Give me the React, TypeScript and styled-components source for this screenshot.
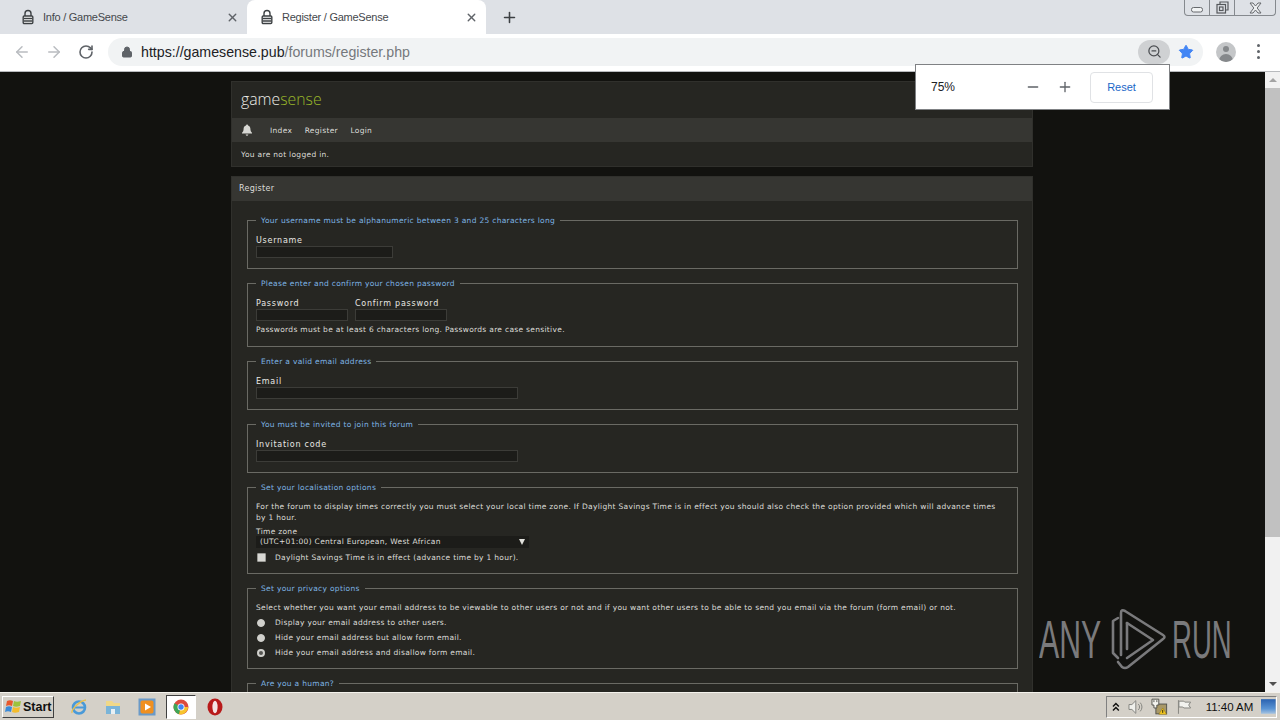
import React from 'react';
import styled, { createGlobalStyle } from 'styled-components';
import { ArrowLeft, ArrowRight, RotateCw, Lock, ZoomOut, Star, Minus, Plus, X } from 'lucide-react';

const Global = createGlobalStyle`
  html, body { margin: 0; padding: 0; width: 1280px; height: 720px; overflow: hidden; }
  body { font-family: 'Liberation Sans', Arial, sans-serif; background: #fff; }
`;

const TabLock = () => (
  <svg width="14" height="16" viewBox="0 0 14 16" fill="none" stroke="#3c4043" strokeWidth="1.4">
    <path d="M4 7V4.500a3 3 0 0 1 6 0V7" />
    <rect x="2.200" y="7" width="9.600" height="7.500" rx="1" fill="#fff" />
    <path d="M3 9.500h8M3 12h8" />
  </svg>
);

const Bell = () => (
  <svg width="12" height="12" viewBox="0 0 12 12" fill="#d8d8d4">
    <path d="M6 .6c.6 0 1 .4 1 .9 1.600.4 2.400 1.700 2.400 3.300 0 2 .6 3 1.600 4v.8H1v-.8c1-1 1.600-2 1.600-4C2.600 3.200 3.400 1.900 5 1.500c0-.5.4-.9 1-.9zM4.600 10.600h2.800C7.200 11.400 6.700 11.800 6 11.800s-1.200-.4-1.400-1.200z" />
  </svg>
);

const MinGlyph = () => (
  <svg width="12" height="6" viewBox="0 0 12 6">
    <rect x="0.500" y="0.500" width="11" height="4.500" rx="2" fill="#f1f3f4" stroke="#66696d" />
  </svg>
);

const RestoreGlyph = () => (
  <svg width="13" height="13" viewBox="0 0 13 13" fill="none" stroke="#55585c" strokeWidth="1.200">
    <path d="M4 3V1h8v8h-2" />
    <rect x="1" y="3.500" width="8.500" height="8.500" />
    <rect x="3.500" y="6" width="3.500" height="3.500" />
  </svg>
);

const CloseGlyph = () => (
  <svg width="13" height="12" viewBox="0 0 13 12">
    <path d="M1 1h3l2.500 3L9 1h3L8.200 6 12 11H9L6.500 8 4 11H1l3.800-5z" fill="#eceef0" stroke="#66696d" />
  </svg>
);

const AnyRunMark = () => (
  <svg width="71" height="70" viewBox="0 0 71 70" fill="none" stroke="#7a7a7c" strokeWidth="2.600" strokeLinejoin="round" strokeLinecap="round">
    <path d="M17 13 12 16V48L17 53" />
    <path d="M20 50V8Q20 4 24 6L62 30Q65 32 62 34L27 62Q24 64 21 62L17 57" />
    <path d="M26 18 52 35 26 53" />
    <path d="M26 18V44" />
  </svg>
);

const WinLogo = () => (
  <svg width="18" height="16" viewBox="0 0 18 16">
    <path d="M3 2c2-1 4-1 6 0L8 7C6 6 4 6 2 7z" fill="#e8582c" />
    <path d="M10 2c2 1 4 1 7 0l-1 5c-3 1-5 1-7 0z" fill="#9cc23c" />
    <path d="M2 8c2-1 4-1 6 0l-1 5c-2-1-4-1-6 0z" fill="#3a8ad8" />
    <path d="M9 8c2 1 4 1 7 0l-1 5c-3 1-5 1-7 0z" fill="#f4bc2c" />
  </svg>
);

const IeIcon = () => (
  <svg width="18" height="18" viewBox="0 0 18 18" fill="none">
    <circle cx="9" cy="9.500" r="6" stroke="#4a9ad8" strokeWidth="2.600" />
    <path d="M3 9.500h12" stroke="#4a9ad8" strokeWidth="2" />
    <path d="M2 15C1 12 9 3 16 2" stroke="#e8c050" strokeWidth="1.300" />
  </svg>
);

const FolderIcon = () => (
  <svg width="16" height="17" viewBox="0 0 16 17">
    <path d="M1 3h6l2 2h6v11H1z" fill="#f0d888" />
    <path d="M1 8h14v8H1z" fill="#7ab4d8" />
    <path d="M6 11h4v5H6z" fill="#e8f0f4" />
  </svg>
);

const MediaIcon = () => (
  <svg width="18" height="18" viewBox="0 0 18 18">
    <rect x="0.500" y="0.500" width="17" height="17" fill="#6a9ac8" />
    <rect x="2.500" y="2.500" width="13" height="13" rx="2" fill="#f09020" />
    <path d="M7 5.500 13 9l-6 3.500z" fill="#fff" />
  </svg>
);

const ChromeIcon = () => (
  <svg width="16" height="16" viewBox="0 0 16 16">
    <circle cx="8" cy="8" r="7.500" fill="#dd4b3e" />
    <path d="M8 8 1.500 4.300A7.500 7.500 0 0 0 6 15.200z" fill="#3fa757" />
    <path d="M8 8h7.200A7.500 7.500 0 0 1 6 15.200z" fill="#f6c42d" />
    <circle cx="8" cy="8" r="3.500" fill="#fff" />
    <circle cx="8" cy="8" r="2.700" fill="#4285f4" />
  </svg>
);

const OperaIcon = () => (
  <svg width="16" height="18" viewBox="0 0 16 18">
    <ellipse cx="8" cy="9" rx="7.500" ry="8.500" fill="#b81a1a" />
    <ellipse cx="8" cy="9" rx="2.600" ry="6.200" fill="#f4e4e4" />
  </svg>
);

const ChevronsUp = () => (
  <svg width="8" height="10" viewBox="0 0 8 10" fill="none" stroke="#101010" strokeWidth="1.500">
    <path d="M1 4.500 4 1.500 7 4.500M1 8.500 4 5.500 7 8.500" />
  </svg>
);

const SpeakerIcon = () => (
  <svg width="16" height="16" viewBox="0 0 16 16" fill="#f0f0ec" stroke="#85857f" strokeWidth="1">
    <path d="M1 5.500h3L8 1.500v13l-4-4H1z" />
    <path d="M10.500 5a4 4 0 0 1 0 6M12.500 3.500a6.500 6.500 0 0 1 0 9" fill="none" />
  </svg>
);

const NetworkIcon = () => (
  <svg width="17" height="17" viewBox="0 0 17 17">
    <rect x="5" y="6" width="11" height="10" fill="#a89868" stroke="#55554f" />
    <path d="M1 1h7v6H6v3H3V7H1z" fill="#f4f4f0" stroke="#55554f" />
    <path d="M3 2v2M6 2v2" stroke="#55554f" />
    <path d="M8 16.500 12 10l4 6.500z" fill="#f4c820" stroke="#8a7010" strokeWidth=".5" />
    <path d="M12 12v3" stroke="#302808" />
  </svg>
);

const FlagIcon = () => (
  <svg width="16" height="16" viewBox="0 0 16 16" fill="#f2f2ee" stroke="#85857f">
    <path d="M2.500 1v14" fill="none" />
    <path d="M3 2h5l1 1h6l-2 3 2 3H8L7 8H3z" />
  </svg>
);

const DesktopIcon = () => (
  <svg width="15" height="15" viewBox="0 0 15 15">
    <defs>
      <linearGradient id="desk" x1="0" y1="0" x2="0" y2="1">
        <stop offset="0" stopColor="#2a62b0" />
        <stop offset="0.65" stopColor="#5a94d4" />
        <stop offset="1" stopColor="#a8c4e0" />
      </linearGradient>
    </defs>
    <rect width="15" height="15" fill="url(#desk)" />
  </svg>
);

const Screen = styled.div`
  width: 1280px;
  height: 720px;
  display: flex;
  flex-direction: column;
  position: relative;
  overflow: hidden;
`;

const TabStrip = styled.div`
  height: 34px;
  background: #dee1e6;
  display: flex;
  align-items: flex-end;
  padding-left: 8px;
  position: relative;
  flex: none;
`;

const Tab = styled.div<{ $active?: boolean }>`
  width: 239px;
  height: 34px;
  display: flex;
  align-items: center;
  padding: 0 8px 0 13px;
  box-sizing: border-box;
  gap: 8px;
  background: ${p => (p.$active ? '#fff' : 'transparent')};
  border-radius: 8px 8px 0 0;
  font-size: 11px;
  letter-spacing: -0.250px;
  color: #45484c;
  span { flex: 1; }
`;

const NewTab = styled.div`
  width: 32px;
  height: 34px;
  display: flex;
  align-items: center;
  justify-content: center;
  margin-left: 7px;
  color: #3c4043;
`;

const WindowControls = styled.div`
  position: absolute;
  top: 0;
  right: 4px;
  width: 92px;
  height: 16px;
  box-sizing: border-box;
  border: 1px solid #85898e;
  border-top: none;
  border-radius: 0 0 4px 4px;
  display: grid;
  grid-template-columns: 24px 25px 1fr;
`;

const WinCell = styled.div<{ $low?: boolean }>`
  display: flex;
  align-items: center;
  justify-content: center;
  padding-top: ${p => (p.$low ? '4px' : '0')};
  & + & { border-left: 1px solid #85898e; }
`;

const Toolbar = styled.div`
  height: 35px;
  padding: 0 0 2px 12px;
  background: #fff;
  border-bottom: 1px solid #b8babd;
  box-sizing: content-box;
  display: flex;
  align-items: center;
  flex: none;
  position: relative;
`;

const NavButton = styled.div<{ $off?: boolean }>`
  width: 20px;
  margin-right: 12px;
  display: flex;
  justify-content: center;
  color: ${p => (p.$off ? '#b9bcc0' : '#5f6368')};
`;

const AddressBar = styled.div`
  width: 1095px;
  height: 28px;
  background: #f1f3f4;
  border-radius: 14px;
  display: flex;
  align-items: center;
  padding-left: 13px;
  box-sizing: border-box;
  font-size: 14.200px;
  gap: 8px;
  color: #202124;
`;

const UrlFaint = styled.span`
  color: #75787c;
`;

const Url = styled.div`
  flex: 1;
`;

const ZoomPill = styled.div`
  width: 32px;
  height: 24px;
  border-radius: 12px;
  background: #cfd1d3;
  display: flex;
  align-items: center;
  justify-content: center;
  color: #4a4d51;
  margin-right: -7px;
`;

const StarPill = styled.div`
  width: 30px;
  height: 28px;
  display: flex;
  align-items: center;
  justify-content: center;
  color: #4285f4;
  margin-right: 2px;
`;

const Avatar = styled.div`
  width: 20px;
  height: 20px;
  margin-left: 13px;
  border-radius: 50%;
  background: #c4c6c8;
  position: relative;
  overflow: hidden;
  flex: none;
  &::before {
    content: '';
    position: absolute;
    left: 7px;
    top: 4px;
    width: 6px;
    height: 6px;
    border-radius: 50%;
    background: #85888b;
  }
  &::after {
    content: '';
    position: absolute;
    left: 3px;
    top: 12px;
    width: 14px;
    height: 8px;
    border-radius: 7px 7px 0 0;
    background: #85888b;
  }
`;

const Kebab = styled.div`
  margin-left: 21px;
  display: flex;
  flex-direction: column;
  gap: 3px;
  i {
    display: block;
    width: 3px;
    height: 3px;
    border-radius: 50%;
    background: #5f6368;
  }
`;

const Viewport = styled.div`
  height: 620px;
  flex: none;
  display: flex;
  background: #12120f;
  overflow: hidden;
`;

const Page = styled.div`
  flex: 1;
  height: 620px;
  overflow: hidden;
  padding: 9px 232px 0 231px;
  box-sizing: border-box;
  font-family: 'DejaVu Sans', Verdana, sans-serif;
  font-size: 7.500px;
  letter-spacing: 0.300px;
  color: #dcdcd8;
`;

const Panel = styled.div`
  background: #262622;
  border: 1px solid #30302c;
  margin-bottom: 9px;
`;

const Brand = styled.div`
  height: 34px;
  padding: 0 0 2px 9px;
  display: flex;
  align-items: center;
  font-family: 'Open Sans', sans-serif;
  font-size: 15.800px;
  font-weight: 300;
  letter-spacing: 0;
  color: #ecece8;
  em { font-style: normal; color: #9ab82a; }
`;

const NavBar = styled.div`
  height: 24px;
  background: #363632;
  display: flex;
  align-items: center;
  padding-left: 9px;
  gap: 12.500px;
`;

const NavLink = styled.span`
  &:first-of-type { margin-left: 4.500px; }
`;

const Status = styled.div`
  height: 24px;
  line-height: 25px;
  padding-left: 9px;
`;

const PanelHead = styled.div`
  height: 24px;
  line-height: 23px;
  background: #363632;
  padding-left: 7px;
  font-size: 8px;
`;

const PanelBody = styled.div`
  padding: 14px 14px 0 15px;
`;

const Group = styled.fieldset<{ $h: number }>`
  margin: 0 0 9px;
  padding: 0 8px;
  height: ${p => p.$h}px;
  box-sizing: border-box;
  border: 1px solid #6a6a64;
  min-width: 0;
`;

const Caption = styled.legend`
  margin-left: 0;
  padding: 0 5px;
  color: #7eb4e4;
  line-height: 11px;
`;

const Row = styled.div`
  display: flex;
  gap: 7px;
`;

const Field = styled.label`
  display: flex;
  flex-direction: column;
  font-size: 8px;
  line-height: 11px;
  letter-spacing: 0.750px;
  padding-top: 9px;
  font-weight: 500;
  color: #e8e8e4;
`;

const Input = styled.input<{ $w: number }>`
  display: block;
  width: ${p => p.$w}px;
  height: 12px;
  box-sizing: border-box;
  margin: 0;
  padding: 0;
  background: #1c1c19;
  border: 1px solid #3c3c38;
`;

const Note = styled.p<{ $top?: number }>`
  margin: ${p => p.$top ?? 0}px 0 0;
  max-width: 744px;
  line-height: 11px;
`;

const ZoneSelect = styled.div`
  width: 273px;
  height: 12px;
  margin-top: -1px;
  background: #1c1c19;
  display: flex;
  justify-content: space-between;
  align-items: center;
  padding: 0 4px;
  box-sizing: border-box;
  line-height: 12px;
`;

const Caret = styled.i`
  width: 0;
  height: 0;
  border-left: 3.500px solid transparent;
  border-right: 3.500px solid transparent;
  border-top: 6px solid #e0e0dc;
`;

const OptionList = styled.div<{ $top: number }>`
  margin-top: ${p => p.$top}px;
`;

const OptionRow = styled.div`
  display: flex;
  align-items: center;
  height: 15px;
  gap: 9px;
`;

const Check = styled.i`
  width: 7px;
  height: 7px;
  margin-left: 1px;
  background: #d8d8d4;
  border: 1px solid #9a9a96;
  border-radius: 1px;
`;

const Radio = styled.i<{ $on?: boolean }>`
  margin: 0 1px;
  flex: none;
  border-radius: 50%;
  box-sizing: content-box;
  background: ${p => (p.$on ? '#555552' : '#d0d0cc')};
  border: ${p => (p.$on ? '2px solid #d0d0cc' : '1px solid #d0d0cc')};
  width: ${p => (p.$on ? '4px' : '6px')};
  height: ${p => (p.$on ? '4px' : '6px')};
`;

const Scrollbar = styled.div`
  width: 15px;
  flex: none;
  background: #f1f1f1;
  display: flex;
  flex-direction: column;
`;

const ScrollArrow = styled.div<{ $up?: boolean }>`
  height: 16px;
  display: flex;
  align-items: center;
  justify-content: center;
  &::after {
    content: '';
    border-left: 4px solid transparent;
    border-right: 4px solid transparent;
    ${p => (p.$up ? 'border-bottom: 4px solid #a3a3a3;' : 'border-top: 4px solid #505050;')}
  }
`;

const ScrollThumb = styled.div`
  height: 449px;
  background: #c1c1c1;
`;

const ScrollRest = styled.div`
  flex: 1;
`;

const ZoomBubble = styled.div`
  position: absolute;
  left: 915px;
  top: 64px;
  width: 255px;
  height: 46px;
  box-sizing: border-box;
  background: #fff;
  border: 1px solid #7f8184;
  display: flex;
  align-items: center;
  padding-left: 15px;
  font-size: 12px;
  color: #202124;
  z-index: 3;
`;

const ZoomValue = styled.span`
  width: 86px;
`;

const ZoomStep = styled.div`
  width: 32px;
  display: flex;
  justify-content: center;
  color: #5f6368;
`;

const ResetButton = styled.div`
  margin-left: 9px;
  width: 63px;
  height: 31px;
  box-sizing: border-box;
  border: 1px solid #e0e2e5;
  border-radius: 4px;
  display: flex;
  align-items: center;
  justify-content: center;
  font-size: 11px;
  color: #1a67c8;
`;

const Watermark = styled.div`
  position: absolute;
  left: 1039px;
  top: 605px;
  height: 70px;
  display: flex;
  align-items: center;
  color: #7a7a7c;
  z-index: 2;
  pointer-events: none;
`;

const MarkWord = styled.span<{ $w: number; $sx: number }>`
  display: block;
  width: ${p => p.$w}px;
  font-size: 53px;
  line-height: 70px;
  white-space: nowrap;
  transform: scaleX(${p => p.$sx});
  transform-origin: left center;
`;

const Taskbar = styled.div`
  height: 28px;
  flex: none;
  background: #d4d0c8;
  border-top: 1px solid #f4f2ec;
  box-sizing: border-box;
  display: flex;
  align-items: center;
  padding-left: 2px;
`;

const StartButton = styled.div`
  width: 52px;
  height: 22px;
  box-sizing: border-box;
  border: 1px solid;
  border-color: #fff #404040 #404040 #fff;
  display: flex;
  align-items: center;
  gap: 1px;
  padding-left: 1px;
  font-size: 12.500px;
  font-weight: 700;
  color: #101010;
`;

const QuickIcon = styled.div<{ $active?: boolean }>`
  width: 30px;
  height: 24px;
  margin-left: 4px;
  box-sizing: border-box;
  display: flex;
  align-items: center;
  justify-content: center;
  ${p => p.$active && 'background: #fff; border: 1px solid; border-color: #404040 #fff #fff #404040;'}
`;

const QuickSpacer = styled.div`
  width: 6px;
`;

const Tray = styled.div`
  margin-left: auto;
  margin-right: 3px;
  width: 171px;
  height: 22px;
  box-sizing: border-box;
  border: 1px solid;
  border-color: #808080 #fff #fff #808080;
  display: flex;
  align-items: center;
  padding-left: 5px;
  gap: 8px;
  font-size: 11.500px;
  color: #101010;
`;

const Clock = styled.span`
  margin-left: 6px;
  width: 48px;
  white-space: nowrap;
`;

export default function App() {
  return (
    <Screen>
      <Global />
      <TabStrip>
        <Tab>
          <TabLock />
          <span>Info / GameSense</span>
          <X size={13} strokeWidth={2.500} color="#5f6368" />
        </Tab>
        <Tab $active>
          <TabLock />
          <span>Register / GameSense</span>
          <X size={13} strokeWidth={2.500} color="#5f6368" />
        </Tab>
        <NewTab>
          <Plus size={17} strokeWidth={2.200} />
        </NewTab>
        <WindowControls>
          <WinCell $low><MinGlyph /></WinCell>
          <WinCell><RestoreGlyph /></WinCell>
          <WinCell><CloseGlyph /></WinCell>
        </WindowControls>
      </TabStrip>

      <Toolbar>
        <NavButton $off><ArrowLeft size={18} strokeWidth={2} /></NavButton>
        <NavButton $off><ArrowRight size={18} strokeWidth={2} /></NavButton>
        <NavButton><RotateCw size={16} strokeWidth={2.400} /></NavButton>
        <AddressBar>
          <Lock size={12} fill="#5f6368" color="#5f6368" />
          <Url>
            https://gamesense.pub<UrlFaint>/forums/register.php</UrlFaint>
          </Url>
          <ZoomPill><ZoomOut size={15} strokeWidth={2} /></ZoomPill>
          <StarPill><Star size={16} fill="#4285f4" strokeWidth={1.500} /></StarPill>
        </AddressBar>
        <Avatar />
        <Kebab><i /><i /><i /></Kebab>
      </Toolbar>

      <Viewport>
        <Page>
          <Panel>
            <Brand><span>game<em>sense</em></span></Brand>
            <NavBar>
              <Bell />
              <NavLink>Index</NavLink>
              <NavLink>Register</NavLink>
              <NavLink>Login</NavLink>
            </NavBar>
            <Status>You are not logged in.</Status>
          </Panel>
          <Panel>
            <PanelHead>Register</PanelHead>
            <PanelBody>
              <Group $h={54}>
                <Caption>Your username must be alphanumeric between 3 and 25 characters long</Caption>
                <Field>Username<Input $w={137} /></Field>
              </Group>
              <Group $h={69}>
                <Caption>Please enter and confirm your chosen password</Caption>
                <Row>
                  <Field>Password<Input $w={92} /></Field>
                  <Field>Confirm password<Input $w={92} /></Field>
                </Row>
                <Note $top={3}>Passwords must be at least 6 characters long. Passwords are case sensitive.</Note>
              </Group>
              <Group $h={54}>
                <Caption>Enter a valid email address</Caption>
                <Field>Email<Input $w={262} /></Field>
              </Group>
              <Group $h={54}>
                <Caption>You must be invited to join this forum</Caption>
                <Field>Invitation code<Input $w={262} /></Field>
              </Group>
              <Group $h={92}>
                <Caption>Set your localisation options</Caption>
                <Note $top={8}>For the forum to display times correctly you must select your local time zone. If Daylight Savings Time is in effect you should also check the option provided which will advance times by 1 hour.</Note>
                <Note $top={3}>Time zone</Note>
                <ZoneSelect>(UTC+01:00) Central European, West African<Caret /></ZoneSelect>
                <OptionList $top={2}>
                  <OptionRow><Check />Daylight Savings Time is in effect (advance time by 1 hour).</OptionRow>
                </OptionList>
              </Group>
              <Group $h={86}>
                <Caption>Set your privacy options</Caption>
                <Note $top={8}>Select whether you want your email address to be viewable to other users or not and if you want other users to be able to send you email via the forum (form email) or not.</Note>
                <OptionList $top={2}>
                  <OptionRow><Radio />Display your email address to other users.</OptionRow>
                  <OptionRow><Radio />Hide your email address but allow form email.</OptionRow>
                  <OptionRow><Radio $on />Hide your email address and disallow form email.</OptionRow>
                </OptionList>
              </Group>
              <Group $h={60}>
                <Caption>Are you a human?</Caption>
              </Group>
            </PanelBody>
          </Panel>
        </Page>
        <Scrollbar>
          <ScrollArrow $up />
          <ScrollThumb />
          <ScrollRest />
          <ScrollArrow />
        </Scrollbar>
      </Viewport>

      <Taskbar>
        <StartButton><WinLogo />Start</StartButton>
        <QuickSpacer />
        <QuickIcon><IeIcon /></QuickIcon>
        <QuickIcon><FolderIcon /></QuickIcon>
        <QuickIcon><MediaIcon /></QuickIcon>
        <QuickIcon $active><ChromeIcon /></QuickIcon>
        <QuickIcon><OperaIcon /></QuickIcon>
        <Tray>
          <ChevronsUp />
          <SpeakerIcon />
          <NetworkIcon />
          <FlagIcon />
          <Clock>11:40 AM</Clock>
          <DesktopIcon />
        </Tray>
      </Taskbar>

      <ZoomBubble>
        <ZoomValue>75%</ZoomValue>
        <ZoomStep><Minus size={16} strokeWidth={2} /></ZoomStep>
        <ZoomStep><Plus size={16} strokeWidth={2} /></ZoomStep>
        <ResetButton>Reset</ResetButton>
      </ZoomBubble>

      <Watermark>
        <MarkWord $w={62} $sx={0.57}>ANY</MarkWord>
        <AnyRunMark />
        <MarkWord $w={60} $sx={0.52}>RUN</MarkWord>
      </Watermark>
    </Screen>
  );
}
